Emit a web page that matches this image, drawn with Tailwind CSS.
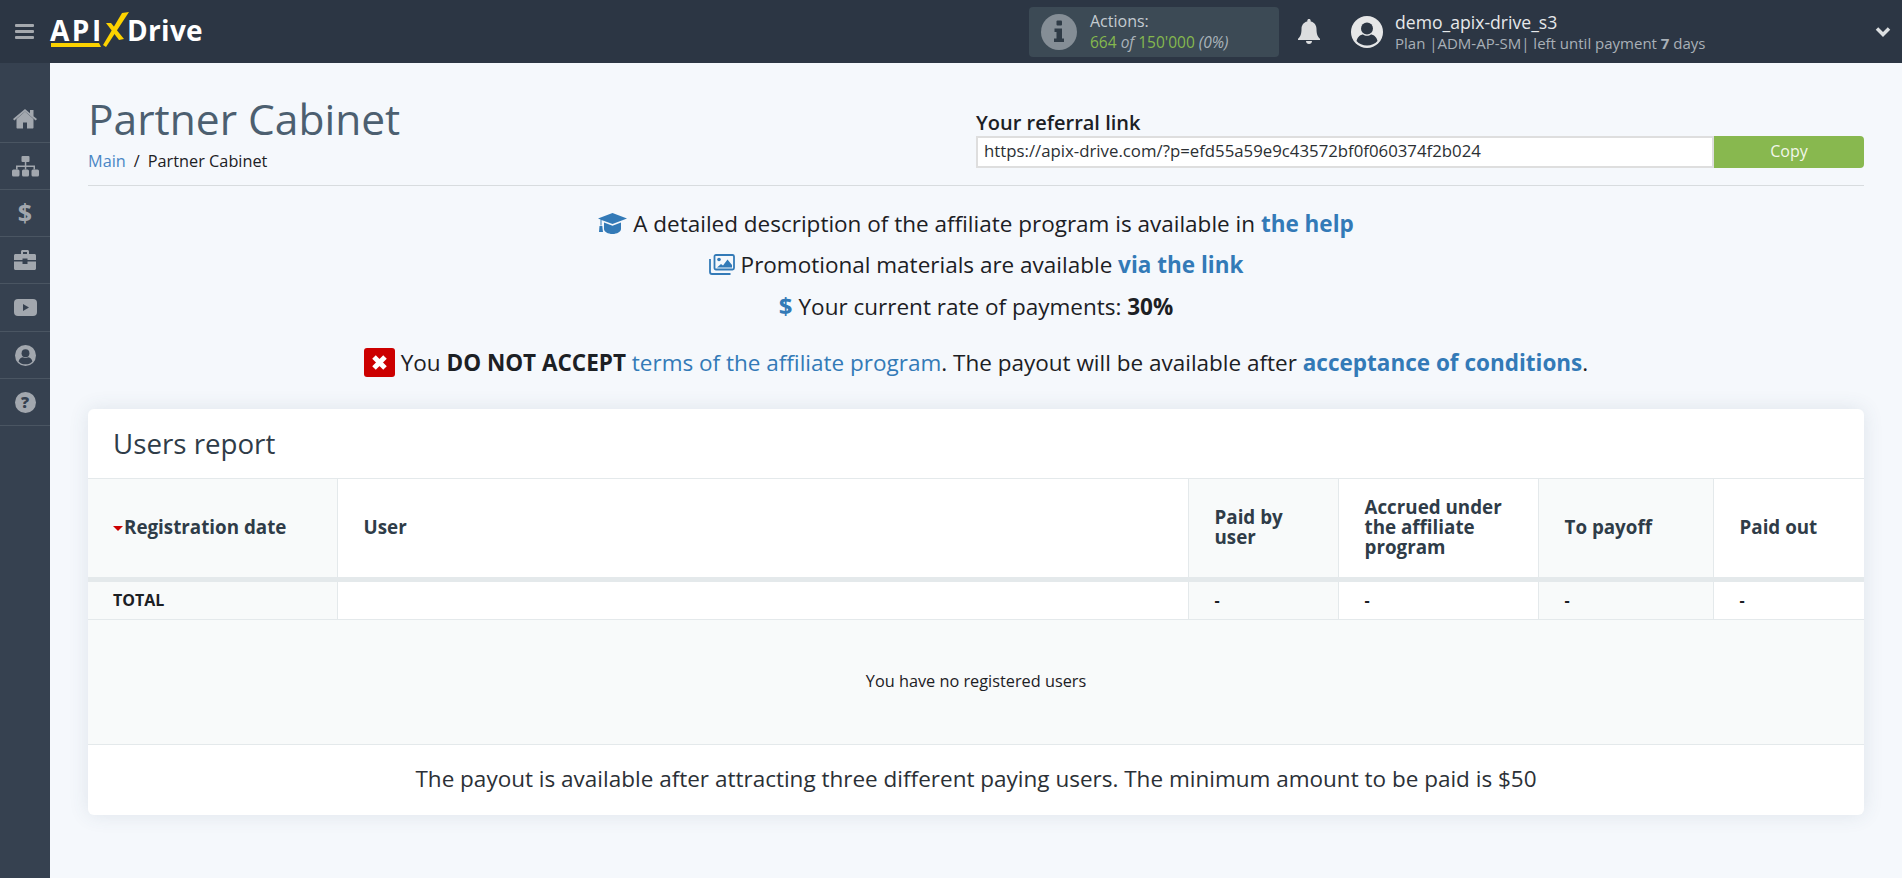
<!DOCTYPE html>
<html lang="en">
  <head>
    <meta charset="UTF-8" />
    <title>Partner Cabinet</title>
    <script src="https://cdn.jsdelivr.net/npm/@tailwindcss/browser@4"></script>
  </head>
  <body class="bg-[#f5f8fc] text-[#1c2024] font-['Open_Sans',sans-serif] h-[878px] overflow-hidden">
    <!-- top bar -->
    <header class="h-[63px] bg-[#2c3644] flex items-center text-white">
      <svg class="w-[19px] h-[17px] ml-[15px]" viewBox="0 0 19 17" fill="#a5a9ae">
        <rect y="1" width="19" height="3" rx="1" /><rect y="7" width="19" height="3" rx="1" /><rect y="13" width="19" height="3" rx="1" />
      </svg>
      <div class="relative w-[160px] h-[63px] ml-[16px] shrink-0">
        <span class="absolute left-0 top-[11px] text-[28px] leading-[38px] font-bold tracking-[2.5px]">API</span>
        <span class="absolute left-[77px] top-[11px] text-[28px] leading-[38px] font-bold tracking-[0.3px]">Drive</span>
        <svg class="absolute left-0 top-0" width="90" height="63" viewBox="0 0 90 63" fill="#fcd200">
          <polygon points="1,43 49,43 51,47 1,47" />
          <polygon points="72,13 79,12 56,47 53,45" />
          <polygon points="56,23 61,23 74,39 69,40" />
        </svg>
      </div>
      <div class="ml-[819px] w-[250px] h-[50px] rounded bg-[#3c4a55] flex items-center shrink-0">
        <svg class="w-[36px] h-[36px] ml-[12px]" viewBox="0 0 36 36">
          <circle cx="18" cy="18" r="18" fill="#858e96" />
          <rect x="15.5" y="6.5" width="5.5" height="5" rx="1" fill="#2f3b46" />
          <path d="M13.5 14.5h7.5v10h2v3.5h-10v-3.5h2.5v-6.5h-2z" fill="#2f3b46" />
        </svg>
        <div class="ml-[13px] leading-[21px]">
          <div class="text-[16px] text-[#c4cbd1]">Actions:</div>
          <div class="text-[15.5px] text-[#85b84e]">664 <i class="text-[#aab3ba]">of</i> 150'000 <i class="text-[#aab3ba]">(0%)</i></div>
        </div>
      </div>
      <svg class="w-[22px] h-[25px] ml-[19px] shrink-0" viewBox="0 0 22 25" fill="#dcdddf">
        <path d="M11 0c1 0 1.700.7 1.700 1.700v.9c3.700.7 5.800 3.800 5.800 7.400 0 5 1 7.500 3.500 9.800v1.200H0v-1.200c2.500-2.300 3.500-4.800 3.500-9.800 0-3.600 2.100-6.700 5.800-7.400v-.9C9.300.7 10 0 11 0z" />
        <path d="M8 22h6c0 1.700-1.300 3-3 3s-3-1.300-3-3z" />
      </svg>
      <svg class="w-[32px] h-[32px] ml-[31px] shrink-0" viewBox="0 0 32 32">
        <circle cx="16" cy="16" r="16" fill="#e6e7e8" />
        <circle cx="16" cy="12.500" r="6" fill="#2c3644" />
        <path d="M5.500 25c1-4.500 4.500-6.500 6.500-6.500 1 .8 2.500 1.300 4 1.300s3-.5 4-1.300c2 0 5.500 2 6.500 6.500-2.500 2.800-6.300 4.500-10.500 4.500s-8-1.700-10.500-4.500z" fill="#2c3644" />
      </svg>
      <div class="ml-[12px] pt-[1px] shrink-0">
        <div class="text-[17.6px] leading-[22px] text-[#e6e8ea]">demo_apix-drive_s3</div>
        <div class="text-[15px] leading-[20px] text-[#a9b0b7]">Plan |ADM-AP-SM| left until payment <b class="font-bold">7</b> days</div>
      </div>
      <svg class="w-[16px] h-[12px] ml-auto mr-[11px] shrink-0" viewBox="0 0 16 12" fill="none" stroke="#dcdfe1" stroke-width="3.500">
        <path d="M2 2.500l6 6 6-6" />
      </svg>
    </header>

    <div class="flex h-[815px]">
      <!-- side menu -->
      <nav class="w-[50px] shrink-0 bg-[#364150] pt-[33px]">
        <a class="h-[47px] flex items-center justify-center border-b border-[#4a5562]">
          <svg class="w-[24px] h-[20px]" viewBox="0 0 24 20" fill="#a2a7ae">
            <path d="M12 2.500L3.500 10v8.500c0 .6.400 1 1 1h5.500v-6h4v6h5.500c.6 0 1-.4 1-1V10z" />
            <path d="M12 0l5 4.200V1h3.500v6.200L24 10l-1.300 1.500L12 2.600 1.300 11.500 0 10z" />
          </svg>
        </a>
        <a class="h-[47px] flex items-center justify-center border-b border-[#4a5562]">
          <svg class="w-[27px] h-[21px]" viewBox="0 0 27 21" fill="#a2a7ae">
            <rect x="9.500" width="8" height="6" rx="1" />
            <path d="M12.800 6h1.500v3.500h8.700v4h-1.500v-2.500h-7.200v2.500h-1.500v-2.500H5.600v2.500H4V9.500h8.800z" />
            <rect y="13.500" width="7.500" height="7" rx="1.500" /><rect x="10" y="13.500" width="7" height="7" rx="1.500" /><rect x="19.500" y="13.500" width="7.500" height="7" rx="1.500" />
          </svg>
        </a>
        <a class="h-[47px] flex items-center justify-center border-b border-[#4a5562] text-[25px] font-bold text-[#a2a7ae]">$</a>
        <a class="h-[47px] flex items-center justify-center border-b border-[#4a5562]">
          <svg class="w-[22px] h-[20px]" viewBox="0 0 22 20" fill="#a2a7ae">
            <path d="M7 4V1.500C7 .7 7.700 0 8.500 0h5c.8 0 1.500.7 1.500 1.500V4h-2V2H9v2z" />
            <path d="M1.500 4h19c.8 0 1.500.7 1.500 1.500V10h-8.500V8.500h-5V10H0V5.500C0 4.700.7 4 1.500 4z" />
            <path d="M0 11.500h8.500V14h5v-2.500H22v7c0 .8-.7 1.500-1.500 1.500h-19C.7 20 0 19.300 0 18.500z" />
          </svg>
        </a>
        <a class="h-[48px] flex items-center justify-center border-b border-[#4a5562]">
          <svg class="w-[23px] h-[17px]" viewBox="0 0 23 17">
            <rect width="23" height="17" rx="4" fill="#a2a7ae" />
            <path d="M9 5l6 3.500-6 3.500z" fill="#364150" />
          </svg>
        </a>
        <a class="h-[47px] flex items-center justify-center border-b border-[#4a5562]">
          <svg class="w-[21px] h-[21px]" viewBox="0 0 32 32">
            <circle cx="16" cy="16" r="16" fill="#a2a7ae" />
            <circle cx="16" cy="12.500" r="6" fill="#364150" />
            <path d="M5.500 25c1-4.500 4.500-6.500 6.500-6.500 1 .8 2.500 1.300 4 1.300s3-.5 4-1.300c2 0 5.500 2 6.500 6.500-2.500 2.800-6.300 4.500-10.500 4.500s-8-1.700-10.500-4.500z" fill="#364150" />
          </svg>
        </a>
        <a class="h-[47px] flex items-center justify-center border-b border-[#4a5562]">
          <span class="w-[21px] h-[21px] rounded-full bg-[#a2a7ae] text-[#364150] text-[16px] leading-[21px] font-extrabold text-center">?</span>
        </a>
      </nav>

      <main class="flex-1 px-[38px]">
        <!-- page head -->
        <div class="h-[123px] border-b border-[#d8dcdf] flex justify-between">
          <div>
            <h1 class="text-[42.5px] leading-[57px] mt-[27px] text-[#4c5f70]">Partner Cabinet</h1>
            <div class="text-[16.3px] leading-[22px] mt-[3px]">
              <a class="text-[#4a86c5]">Main</a><span class="mx-[8px]">/</span><span>Partner Cabinet</span>
            </div>
          </div>
          <div class="w-[888px] pt-[47px]">
            <div class="text-[20px] leading-[25px] font-semibold">Your referral link</div>
            <div class="flex h-[32px] mt-[1px]">
              <div class="w-[738px] border-2 border-[#dedede] bg-white px-[6px] text-[16.8px] leading-[26px] text-[#2b2f33]">https://apix-drive.com/?p=efd55a59e9c43572bf0f060374f2b024</div>
              <button class="w-[150px] bg-[#88b84f] text-[#f2f6ea] text-[16px] leading-[24px] pb-[3px] rounded-r">Copy</button>
            </div>
          </div>
        </div>

        <!-- program info -->
        <div class="text-center text-[22.5px] leading-[41px] mt-[17px]">
          <p class="flex items-center justify-center">
            <svg class="w-[29px] h-[21px] mr-[6px]" viewBox="0 0 29 21" fill="#337ab7">
              <path d="M14.500 0L29 5.500 14.500 11 3.500 7v5.500h-1V6.600L0 5.500z" />
              <path d="M6 9.500l8.500 3.200L23 9.500v6.500c0 2.700-4 5-8.500 5S6 18.700 6 16z" />
              <path d="M1.500 13h2.800l.7 6H1z" />
            </svg>
            <span>A detailed description of the affiliate program is available in <a class="font-bold text-[#337ab7]">the help</a></span>
          </p>
          <p class="flex items-center justify-center">
            <svg class="w-[26px] h-[21px] mr-[6px]" viewBox="0 0 26 21" fill="none" stroke="#337ab7" stroke-width="1.800">
              <rect x="5.500" y="1" width="19.500" height="14.500" rx="1.500" />
              <path d="M1 5v13c0 1 .8 2 2 2h18.500" />
              <circle cx="10" cy="5.500" r="1.800" fill="#337ab7" stroke="none" />
              <path d="M8 13.500l4-3.500 2 1.500 4.500-6 4.500 5.500v2.500z" fill="#337ab7" stroke="none" />
            </svg>
            <span>Promotional materials are available <a class="font-bold text-[#337ab7]">via the link</a></span>
          </p>
          <p>
            <span class="font-bold text-[#337ab7] text-[24px] mr-[6px]">$</span>Your current rate of payments: <b class="font-bold">30%</b>
          </p>
          <p class="flex items-center justify-center mt-[15px]">
            <svg class="w-[31px] h-[29px] mr-[6px]" viewBox="0 0 31 29">
              <rect width="31" height="29" rx="3" fill="#cc0000" />
              <path d="M10 9l11 11M21 9L10 20" stroke="#fff" stroke-width="5" />
            </svg>
            <span>You <b class="font-bold">DO NOT ACCEPT</b> <a class="text-[#337ab7]">terms of the affiliate program</a>. The payout will be available after <a class="font-bold text-[#337ab7]">acceptance of conditions</a>.</span>
          </p>
        </div>

        <!-- report card -->
        <section class="mt-[26px] bg-white rounded-md shadow-[0_0_20px_rgba(60,80,110,0.12)] overflow-hidden">
          <h2 class="h-[70px] px-[25px] text-[27.7px] leading-[68px] text-[#2f3c48] border-b border-[#e4e9eb]">Users report</h2>
          <table class="w-full table-fixed border-collapse text-[#2f3c48]">
            <colgroup>
              <col class="w-[249px]" /><col class="w-[851px]" /><col class="w-[150px]" /><col class="w-[200px]" /><col class="w-[175px]" /><col />
            </colgroup>
            <thead class="text-[18.8px] leading-[20px] font-bold text-left">
              <tr class="h-[100px]">
                <th class="bg-[#f8fafa] pl-[25px] pr-2 pb-[2px] border-r border-[#e4e9eb]"><span class="inline-block align-middle w-0 h-0 border-x-[5px] border-x-transparent border-t-[5px] border-t-[#cc0000] mr-[1px]"></span>Registration date</th>
                <th class="pl-[26px] pb-[2px] border-r border-[#e4e9eb]">User</th>
                <th class="bg-[#f8fafa] pl-[26px] pr-[20px] pb-[2px] border-r border-[#e4e9eb]">Paid by user</th>
                <th class="pl-[26px] pr-2 pb-[2px] border-r border-[#e4e9eb]">Accrued under the affiliate program</th>
                <th class="bg-[#f8fafa] pl-[26px] pb-[2px] border-r border-[#e4e9eb]">To payoff</th>
                <th class="pl-[26px] pb-[2px]">Paid out</th>
              </tr>
            </thead>
            <tbody>
              <tr class="h-[40px] border-t-[5px] border-b border-[#e4e9eb] text-[16px] font-bold text-[#1c2024]">
                <td class="bg-[#f8fafa] pl-[25px] border-r border-[#e4e9eb]">TOTAL</td>
                <td class="border-r border-[#e4e9eb]"></td>
                <td class="bg-[#f8fafa] pl-[26px] border-r border-[#e4e9eb]">-</td>
                <td class="pl-[26px] border-r border-[#e4e9eb]">-</td>
                <td class="bg-[#f8fafa] pl-[26px] border-r border-[#e4e9eb]">-</td>
                <td class="pl-[26px]">-</td>
              </tr>
              <tr class="h-[125px] bg-[#f8fafa] border-b border-[#e4e9eb]">
                <td colspan="6" class="text-center text-[16.3px] text-[#1c2024]">You have no registered users</td>
              </tr>
            </tbody>
          </table>
          <p class="h-[70px] text-center text-[22.5px] leading-[68px] text-[#2b3036]">The payout is available after attracting three different paying users. The minimum amount to be paid is $50</p>
        </section>
      </main>
    </div>
  </body>
</html>
